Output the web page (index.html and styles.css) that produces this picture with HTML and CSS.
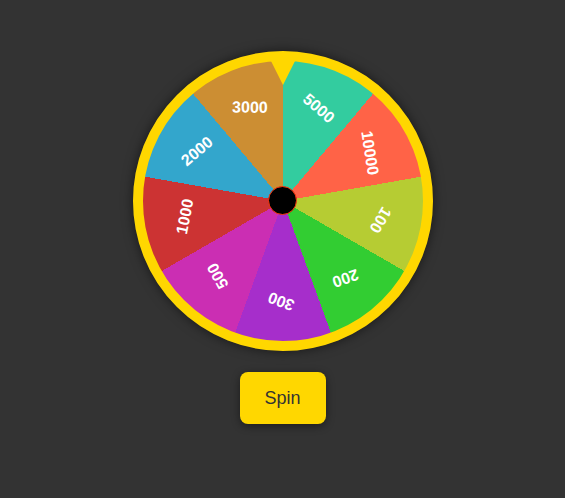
FILE: index.html
```html
<!DOCTYPE html>
<html>
<head>
<meta charset="utf-8">
<link rel="stylesheet" href="styles.css">
</head>
<body>
<main class="app">
  <div class="wheel-wrap">
    <div class="wheel">
      <span class="label" style="transform: translate(-50%,-50%) rotate(21deg) translateY(-99px) rotate(20deg)">5000</span>
      <span class="label" style="transform: translate(-50%,-50%) rotate(61deg) translateY(-99px) rotate(20deg)">10000</span>
      <span class="label" style="transform: translate(-50%,-50%) rotate(101deg) translateY(-99px) rotate(20deg)">100</span>
      <span class="label" style="transform: translate(-50%,-50%) rotate(141deg) translateY(-99px) rotate(20deg)">200</span>
      <span class="label" style="transform: translate(-50%,-50%) rotate(181deg) translateY(-100px) rotate(20deg)">300</span>
      <span class="label" style="transform: translate(-50%,-50%) rotate(221deg) translateY(-99px) rotate(20deg)">500</span>
      <span class="label" style="transform: translate(-50%,-50%) rotate(261deg) translateY(-99px) rotate(20deg)">1000</span>
      <span class="label" style="transform: translate(-50%,-50%) rotate(300deg) translateY(-99px) rotate(20deg)">2000</span>
      <span class="label" style="transform: translate(-50%,-50%) rotate(340.5deg) translateY(-99px) rotate(20deg)">3000</span>
      <div class="hub"></div>
    </div>
    <div class="pointer"></div>
  </div>
  <button class="spin">Spin</button>
</main>
</body>
</html>
```

FILE: styles.css
```css
html, body {
  margin: 0;
  padding: 0;
  background: #333333;
  height: 100%;
}

.app {
  display: flex;
  flex-direction: column;
  align-items: center;
  padding-top: 51px;
  gap: 21px;
  font-family: "Liberation Sans", Arial, sans-serif;
}

.wheel-wrap {
  position: relative;
  width: 300px;
  height: 300px;
}

.wheel {
  position: relative;
  width: 300px;
  height: 300px;
  box-sizing: border-box;
  border: 10px solid #ffd700;
  border-radius: 50%;
  box-shadow: 0 0 12px rgba(0, 0, 0, 0.55);
  background: conic-gradient(
    #33cc9f 0deg 40deg,
    #ff6347 40deg 80deg,
    #b6cc33 80deg 120deg,
    #32cd32 120deg 160deg,
    #a62ecb 160deg 200deg,
    #cb2eb3 200deg 240deg,
    #cc3333 240deg 280deg,
    #33a6cc 280deg 320deg,
    #cc8e33 320deg 360deg
  );
}

.label {
  position: absolute;
  left: 140px;
  top: 140px;
  color: #ffffff;
  font-weight: bold;
  font-size: 16px;
  line-height: 18px;
  white-space: nowrap;
}

.hub {
  position: absolute;
  left: 50%;
  top: 50%;
  width: 27px;
  height: 27px;
  margin: -15px 0 0 -15px;
  background: #000;
  border: 1.5px solid #ff3a10;
  border-radius: 50%;
}

.pointer {
  position: absolute;
  left: 50%;
  top: 2px;
  margin-left: -16px;
  width: 0;
  height: 0;
  border-left: 16px solid transparent;
  border-right: 16px solid transparent;
  border-top: 32px solid #ffd700;
}

.spin {
  width: 86px;
  height: 52px;
  border: none;
  border-radius: 8px;
  background: #ffd700;
  color: #333333;
  font-family: "Liberation Sans", Arial, sans-serif;
  font-size: 18px;
  box-shadow: 0 2px 8px rgba(0, 0, 0, 0.45);
  cursor: pointer;
}
```
